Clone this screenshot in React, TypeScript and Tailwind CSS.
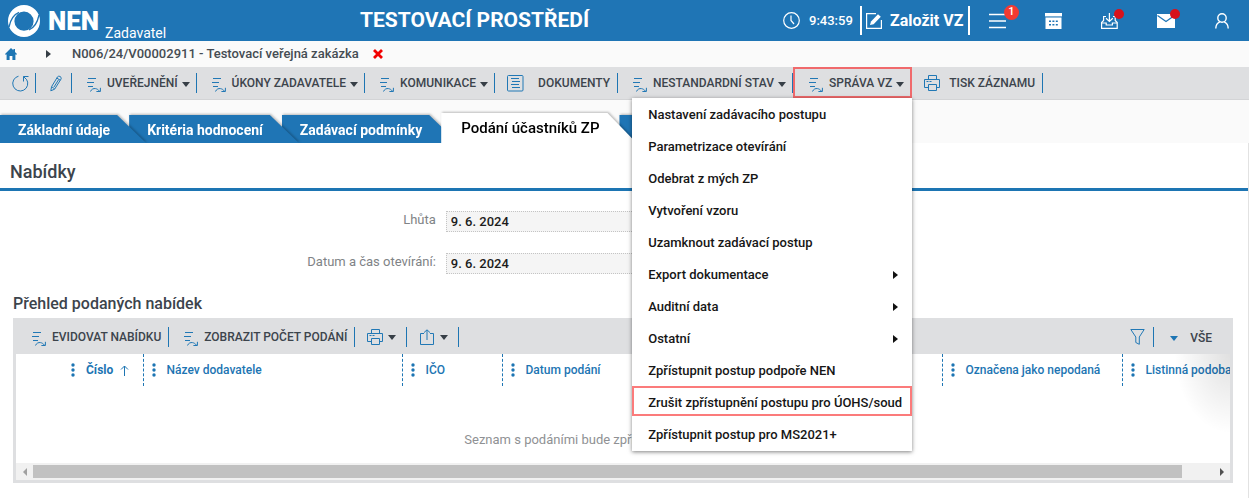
import type { ReactNode } from "react";

function ProcessIcon() {
  return (
    <svg width="14" height="14" viewBox="0 0 14 14" fill="none" stroke="#2178b5" className="shrink-0">
      <path d="M1 0.5H9M0 4.5H7M1 8.5H6" />
      <path d="M3.5 13.5C4.5 11 6.5 10.3 8.5 10.6C10 10.9 11.2 11.6 12.4 13" />
      <path d="M13.4 9.8V13.5H9.4" />
    </svg>
  );
}

function RefreshIcon() {
  return (
    <svg width="17" height="17" viewBox="0 0 17 17" fill="none" stroke="#2178b5" className="shrink-0">
      <path d="M6.5 1.2A7.5 7.5 0 1 0 14.4 4.2" />
      <path d="M16.5 1.5H11.5V6.5M11.5 1.5L14.2 4.2" />
    </svg>
  );
}

function PencilIcon() {
  return (
    <svg width="12" height="17" viewBox="0 0 12 17" fill="none" stroke="#2178b5" className="shrink-0">
      <path d="M0.8 15.8L1.6 11.6L7.6 1.8C8.4 0.5 11.8 1.4 11.2 3.8L4.6 14.2L0.8 15.8Z" />
      <path d="M1.8 11.8L4.6 13.8M6.8 3L10.2 5.2M8.6 4.6L4 12" />
    </svg>
  );
}

function DocumentIcon() {
  return (
    <svg width="17" height="17" viewBox="0 0 17 17" fill="none" stroke="#2178b5" className="shrink-0">
      <rect x="0.5" y="0.5" width="15.5" height="15.5" rx="1" />
      <path d="M4 3.5H12M5 6.5H13M4 9.5H12M5 12.5H13" />
    </svg>
  );
}

function PrinterIcon() {
  return (
    <svg width="17" height="16" viewBox="0 0 17 16" fill="none" stroke="#2178b5" className="shrink-0">
      <path d="M4.5 4V0.5H12.5V4" />
      <path d="M4 12.5H0.5V4.5H15.5V12.5H12.5" />
      <path d="M2.5 6.5H4.5M5.5 6.5H7.5" />
      <path d="M4.5 9.5H12.5V15.5H4.5Z" />
    </svg>
  );
}

function ShareIcon() {
  return (
    <svg width="14" height="16" viewBox="0 0 14 16" fill="none" stroke="#2178b5" className="shrink-0">
      <path d="M4 4.5H0.5V15.5H13.5V4.5H10M7 11V1M4 3.6L7 0.8L10 3.6" />
    </svg>
  );
}

function FilterIcon() {
  return (
    <svg width="15" height="16" viewBox="0 0 15 16" fill="none" stroke="#2178b5" className="shrink-0">
      <path d="M0.8 0.5H14.2L9.3 8V15.3L5.8 13.5V8Z" />
    </svg>
  );
}

function Caret({ blue = false }: { blue?: boolean }) {
  return (
    <svg width="8" height="5" viewBox="0 0 8 5" className="shrink-0">
      <path d="M0 0H8L4 5Z" fill={blue ? "#1d75b3" : "#363e46"} />
    </svg>
  );
}

function LogoMark() {
  return (
    <svg width="32" height="32" viewBox="0 0 32 32" className="shrink-0">
      <path
        fill="#fff"
        fillRule="evenodd"
        d="M16 0A16 16 0 1 1 16 32A16 16 0 1 1 16 0ZM16 6.6A9.6 9.6 0 1 0 16 25.8A9.6 9.6 0 1 0 16 6.6Z"
      />
      <path
        d="M1 22C2.6 14 5.6 9.6 11 7.4M31 10C29.4 18 26.4 22.6 21 24.8"
        fill="none"
        stroke="#1f75b5"
        strokeWidth="1.3"
      />
    </svg>
  );
}

function ToolItem({ label, caret = false }: { label: string; caret?: boolean }) {
  return (
    <button
      type="button"
      className={
        caret
          ? "flex h-5 items-center border-r border-[#1d75b3] pl-[15px] pr-[6px]"
          : "flex h-5 items-center border-r border-[#1d75b3] pl-[15px] pr-[7px]"
      }
    >
      <span className="mr-[6px] pt-[4px]">
        <ProcessIcon />
      </span>
      <span className="whitespace-nowrap">{label}</span>
      {caret && (
        <span className="ml-[4px] pt-[2px]">
          <Caret />
        </span>
      )}
    </button>
  );
}

function Highlight({ children }: { children?: ReactNode }) {
  return (
    <div className="pointer-events-none absolute inset-x-0 -top-px bottom-[3px] border-2 border-[#fb7b7b]">{children}</div>
  );
}

const menuItems = [
  { label: "Nastavení zadávacího postupu" },
  { label: "Parametrizace otevírání" },
  { label: "Odebrat z mých ZP" },
  { label: "Vytvoření vzoru" },
  { label: "Uzamknout zadávací postup" },
  { label: "Export dokumentace", sub: true },
  { label: "Auditní data", sub: true },
  { label: "Ostatní", sub: true },
  { label: "Zpřístupnit postup podpoře NEN" },
  { label: "Zrušit zpřístupnění postupu pro ÚOHS/soud", marked: true },
  { label: "Zpřístupnit postup pro MS2021+" },
];

function ActionMenu() {
  return (
    <ul className="absolute right-0 top-full z-30 w-[280px] bg-white pt-px text-[13px] font-medium text-[#161616] shadow-[0_1px_4px_rgba(0,0,0,0.5)]">
      {menuItems.map((item) => (
        <li key={item.label} className="relative">
          <button
            type="button"
            className="flex h-8 w-full items-center justify-between whitespace-nowrap pl-4 pr-[14px] text-left"
          >
            {item.label}
            {item.sub && (
              <svg width="5" height="8" viewBox="0 0 5 8">
                <path d="M0 0V8L5 4Z" fill="#111" />
              </svg>
            )}
          </button>
          {item.marked && <Highlight />}
        </li>
      ))}
    </ul>
  );
}

function Header() {
  return (
    <header className="flex h-[41px] items-center bg-[#1f75b5] text-white">
      <div className="flex w-[166px] items-center pl-2">
        <LogoMark />
        <span className="ml-2 text-[26px] font-black leading-6">NEN</span>
        <span className="ml-[6px] mt-6 text-sm leading-4">Zadavatel</span>
      </div>
      <h1 className="flex-1 text-center text-[21px] font-bold">TESTOVACÍ PROSTŘEDÍ</h1>
      <div className="flex items-center">
        <svg width="17" height="17" viewBox="0 0 17 17" fill="none" stroke="#fff" strokeWidth="1.2">
          <circle cx="8.5" cy="8.5" r="7.8" />
          <path d="M8 3.5V8.5L11 12" />
        </svg>
        <time className="ml-[9px] w-[51px] text-[13px] font-medium">9:43:59</time>
        <button type="button" className="flex h-[29px] w-[110px] items-center gap-2 whitespace-nowrap border-x-2 border-white pl-1 text-base font-bold">
          <svg width="16" height="16" viewBox="0 0 16 16" fill="none" stroke="#fff" className="shrink-0">
            <path d="M10 0.6H0.6V15.4H15.4V7" strokeWidth="1.2" />
            <path d="M4 12L5 8.6L12 1.2L14.8 3.8L7.6 11.2Z" fill="#fff" stroke="none" />
          </svg>
          Založit VZ
        </button>
        <button type="button" aria-label="Nabídka" className="relative ml-[19px]">
          <svg width="17" height="16" viewBox="0 0 17 16" stroke="#fff" strokeWidth="1.5">
            <path d="M0 1.5H17M0 8H17M0 14.5H17" />
          </svg>
          <span className="absolute -right-[13px] -top-[8px] flex size-[15px] items-center justify-center rounded-full bg-[#f23a32] text-[11px] font-medium">
            1
          </span>
        </button>
        <button type="button" aria-label="Kalendář" className="ml-[39px]">
          <svg width="17" height="16" viewBox="0 0 17 16" fill="#fff">
            <path d="M0 0H17V3.4H0Z" />
            <path fillRule="evenodd" d="M0.5 4.5H16.5V16H0.5ZM4 7.4V9H6V7.4ZM7.4 7.4V9H9.4V7.4ZM10.8 7.4V9H12.8V7.4ZM4 11V12.6H6V11ZM7.4 11V12.6H9.4V11ZM10.8 11V12.6H12.8V11Z" />
          </svg>
        </button>
        <button type="button" aria-label="Přijaté" className="relative ml-[39px]">
          <svg width="17" height="16" viewBox="0 0 17 16" fill="none" stroke="#fff" strokeWidth="1.2">
            <path d="M5 3.5H2.6V7.5L0.6 9.5V15.4H16.2V9.5L14.2 7.5V3.5H12" />
            <path d="M0.6 10H5.2V12H11.4V10H16.2M8.4 0V8M5 5.2L8.4 8.4L11.8 5.2" />
          </svg>
          <span className="absolute -right-[6px] -top-[4px] size-[10px] rounded-full bg-[#d8121b]" />
        </button>
        <button type="button" aria-label="Zprávy" className="relative ml-[39px]">
          <svg width="18" height="14" viewBox="0 0 18 14">
            <path d="M0 0H18V14H0Z" fill="#fff" />
            <path d="M0.5 1.5L9 7.5L17.5 1.5" fill="none" stroke="#1f75b5" strokeWidth="1.2" />
          </svg>
          <span className="absolute -right-[5px] -top-[5px] size-[10px] rounded-full bg-[#d8121b]" />
        </button>
        <button type="button" aria-label="Uživatel" className="ml-10 mr-5">
          <svg width="14" height="16" viewBox="0 0 14 16" fill="none" stroke="#fff" strokeWidth="1.4">
            <ellipse cx="7" cy="5" rx="4.2" ry="4.3" />
            <path d="M0.8 15.6C0.8 12 2.6 9.8 4.8 8.8M13.2 15.6C13.2 12 11.4 9.8 9.2 8.8" />
          </svg>
        </button>
      </div>
    </header>
  );
}

function Breadcrumb() {
  return (
    <nav className="flex h-[26px] items-center pl-[5px] text-[13px] font-medium text-[#454c53]">
      <a href="#domu" aria-label="Domů">
        <svg width="12" height="12" viewBox="0 0 12 12" fill="#1d75b3">
          <path d="M6 0L8.4 2.3V1H10V4L12 6V6.6H10.4V12H7.4V8H4.6V12H1.6V6.6H0V6Z" />
        </svg>
      </a>
      <svg width="5" height="8" viewBox="0 0 5 8" className="ml-[29px]">
        <path d="M0 0V8L5 4Z" fill="#363e46" />
      </svg>
      <a href="#zakazka" className="ml-[21px]">N006/24/V00002911 - Testovací veřejná zakázka</a>
      <button type="button" aria-label="Zavřít" className="ml-[14px]">
        <svg width="10" height="10" viewBox="0 0 10 10" stroke="#f20000" strokeWidth="2.8">
          <path d="M1 1L9 9M9 1L1 9" />
        </svg>
      </button>
    </nav>
  );
}

function Toolbar() {
  return (
    <div className="relative z-20 flex h-[33px] items-start border-b border-[#d3d4d6] bg-[#dedfe1] text-xs font-medium text-[#3c444c]">
      <div className="flex h-8 items-center">
        <button type="button" aria-label="Obnovit" className="flex h-5 w-9 items-center border-r border-[#1d75b3] pl-3 pt-px">
          <RefreshIcon />
        </button>
        <button type="button" aria-label="Upravit" className="flex h-5 w-9 items-center border-r border-[#1d75b3] pl-[14px] pt-px">
          <PencilIcon />
        </button>
        <ToolItem label="UVEŘEJNĚNÍ" caret />
        <ToolItem label="ÚKONY ZADAVATELE" caret />
        <ToolItem label="KOMUNIKACE" caret />
        <button type="button" className="flex h-5 items-center gap-[14px] border-r border-[#1d75b3] pl-3 pr-[7px]">
          <DocumentIcon />
          DOKUMENTY
        </button>
        <ToolItem label="NESTANDARDNÍ STAV" caret />
      </div>
      <div className="relative flex h-[31px] items-center px-px pt-px">
        <ToolItem label="SPRÁVA VZ" caret />
        <div className="pointer-events-none absolute inset-0 border-2 border-[#f06a6c]" />
        <ActionMenu />
      </div>
      <div className="flex h-8 items-center">
        <button type="button" className="flex h-5 items-center gap-2 border-r border-[#1d75b3] pl-3 pr-[7px]">
          <PrinterIcon />
          TISK ZÁZNAMU
        </button>
      </div>
    </div>
  );
}

const tabs = [
  { label: "Základní údaje", layer: "z-[5]" },
  { label: "Kritéria hodnocení", layer: "z-[4] -ml-[17px]" },
  { label: "Zadávací podmínky", layer: "z-[3] -ml-[17px]" },
  { label: "Podání účastníků ZP", layer: "z-[6] -ml-[17px]", active: true },
  { label: "Dodatečné informace", layer: "z-[2] -ml-[17px]" },
];

function Tabs() {
  return (
    <div role="tablist" className="flex h-[43px] items-end overflow-hidden">
      {tabs.map((tab) => (
        <div
          key={tab.label}
          className={`relative drop-shadow-[1px_-1px_1px_rgba(0,0,0,0.25)] ${tab.layer}`}
        >
          <button
            type="button"
            role="tab"
            aria-selected={!!tab.active}
            className={
              tab.active
                ? "block h-[30px] whitespace-nowrap bg-white pl-5 pr-[37px] text-[15px] font-medium text-black [clip-path:polygon(0_0,calc(100%-29px)_0,100%_100%,0_100%)]"
                : "block h-7 whitespace-nowrap bg-[#1f75b5] pl-[18px] pr-9 pt-[2px] text-sm font-bold text-white [clip-path:polygon(0_0,calc(100%-29px)_0,100%_100%,0_100%)]"
            }
          >
            {tab.label}
          </button>
        </div>
      ))}
    </div>
  );
}

function Field({ id, label, value }: { id: string; label: string; value: string }) {
  return (
    <div className="flex h-[42px] items-start">
      <label htmlFor={id} className="w-[35%] pr-px text-right text-[13px] leading-[18px] text-[#808386]">
        {label}
      </label>
      <input
        id={id}
        readOnly
        defaultValue={value}
        className="ml-[9px] h-[21px] w-60 border border-dotted border-[#c4c4c4] bg-[#f5f5f5] px-1 text-[13px] font-medium text-[#1c1c1c]"
      />
    </div>
  );
}

function HeadCell({ label, sorted = false, first = false }: { label: string; sorted?: boolean; first?: boolean }) {
  return (
    <th className={first ? "p-0 pl-[47px] font-medium" : "border-l border-dashed border-[#1d75b3] p-0 font-medium"}>
      <span className="flex h-8 items-center whitespace-nowrap pl-2">
        <svg width="4" height="14" viewBox="0 0 4 14" fill="#1d75b3" className="mr-[11px] shrink-0">
          <circle cx="2" cy="2" r="1.7" />
          <circle cx="2" cy="7" r="1.7" />
          <circle cx="2" cy="12" r="1.7" />
        </svg>
        <span className={sorted ? "font-bold" : ""}>{label}</span>
        {sorted && (
          <svg width="9" height="11" viewBox="0 0 9 11" fill="none" stroke="#1d75b3" className="ml-[7px]">
            <path d="M4.5 11V1M1 4.5L4.5 1L8 4.5" />
          </svg>
        )}
      </span>
    </th>
  );
}

function Offers() {
  return (
    <section className="ml-[13px] mr-[15px] border-[3px] border-t-0 border-[#dedfe1] bg-white">
      <div className="flex h-9 items-center bg-[#dedfe1] pl-px pt-[2px] text-xs font-medium text-[#3c444c]">
        <ToolItem label="EVIDOVAT NABÍDKU" />
        <ToolItem label="ZOBRAZIT POČET PODÁNÍ" />
        <button type="button" aria-label="Tisk" className="flex h-5 w-[52px] items-center gap-1 border-r border-[#1d75b3] pl-3">
          <PrinterIcon />
          <Caret />
        </button>
        <button type="button" aria-label="Export" className="flex h-5 w-[52px] items-center gap-[6px] border-r border-[#1d75b3] pl-[13px]">
          <ShareIcon />
          <Caret />
        </button>
        <button type="button" aria-label="Filtr" className="ml-auto flex h-5 items-center border-r border-[#1d75b3] pr-2">
          <FilterIcon />
        </button>
        <button type="button" className="flex items-center gap-3 pl-4 pr-[18px] pt-[2px]">
          <Caret blue />
          VŠE
        </button>
      </div>
      <div className="relative h-[109px] overflow-hidden">
        <table className="w-[1300px] table-fixed border-collapse text-left text-xs text-[#1d75b3]">
          <colgroup>
            <col className="w-[127px]" />
            <col className="w-[259px]" />
            <col className="w-[100px]" />
            <col className="w-[440px]" />
            <col className="w-[180px]" />
            <col />
          </colgroup>
          <thead>
            <tr>
              <HeadCell label="Číslo" sorted first />
              <HeadCell label="Název dodavatele" />
              <HeadCell label="IČO" />
              <HeadCell label="Datum podání" />
              <HeadCell label="Označena jako nepodaná" />
              <HeadCell label="Listinná podoba" />
            </tr>
          </thead>
        </table>
        <p className="pl-1 pt-11 text-center text-[13px] leading-5 text-[#8f9194]">
          Seznam s podáními bude zpřístupněn po skončení lhůty
        </p>
        <div className="pointer-events-none absolute right-0 top-0 h-20 w-14 bg-[radial-gradient(ellipse_at_top_right,rgba(0,0,0,0.12),transparent_70%)]" />
      </div>
      <div className="flex h-[17px] items-center bg-[#f1f1f1]">
        <span className="flex w-[17px] justify-center">
          <svg width="4" height="8" viewBox="0 0 4 8">
            <path d="M4 0V8L0 4Z" fill="#a0a0a0" />
          </svg>
        </span>
        <div className="flex-1">
          <div className="mr-[31px] h-[13px] bg-[#c1c1c1]" />
        </div>
        <span className="flex w-[17px] justify-center">
          <svg width="4" height="8" viewBox="0 0 4 8">
            <path d="M0 0V8L4 4Z" fill="#505050" />
          </svg>
        </span>
      </div>
    </section>
  );
}

export default function App() {
  return (
    <div className="min-h-screen bg-[#fafafa] font-[Roboto,sans-serif]">
      <Header />
      <Breadcrumb />
      <Toolbar />
      <Tabs />
      <main className="min-h-[355px] border-r border-[#e2e2e2] bg-white">
        <h2 className="flex h-12 items-center border-b-[3px] border-[#1d75b3] pl-[10px] pt-3 text-lg font-medium text-[#3c444c]">
          Nabídky
        </h2>
        <div className="pt-5">
          <Field id="deadline" label="Lhůta" value="9. 6. 2024" />
          <Field id="opening" label="Datum a čas otevírání:" value="9. 6. 2024" />
        </div>
        <h3 className="flex h-[23px] items-center pb-[6px] pl-[13px] text-base font-medium text-[#3c444c]">
          Přehled podaných nabídek
        </h3>
        <Offers />
      </main>
    </div>
  );
}
